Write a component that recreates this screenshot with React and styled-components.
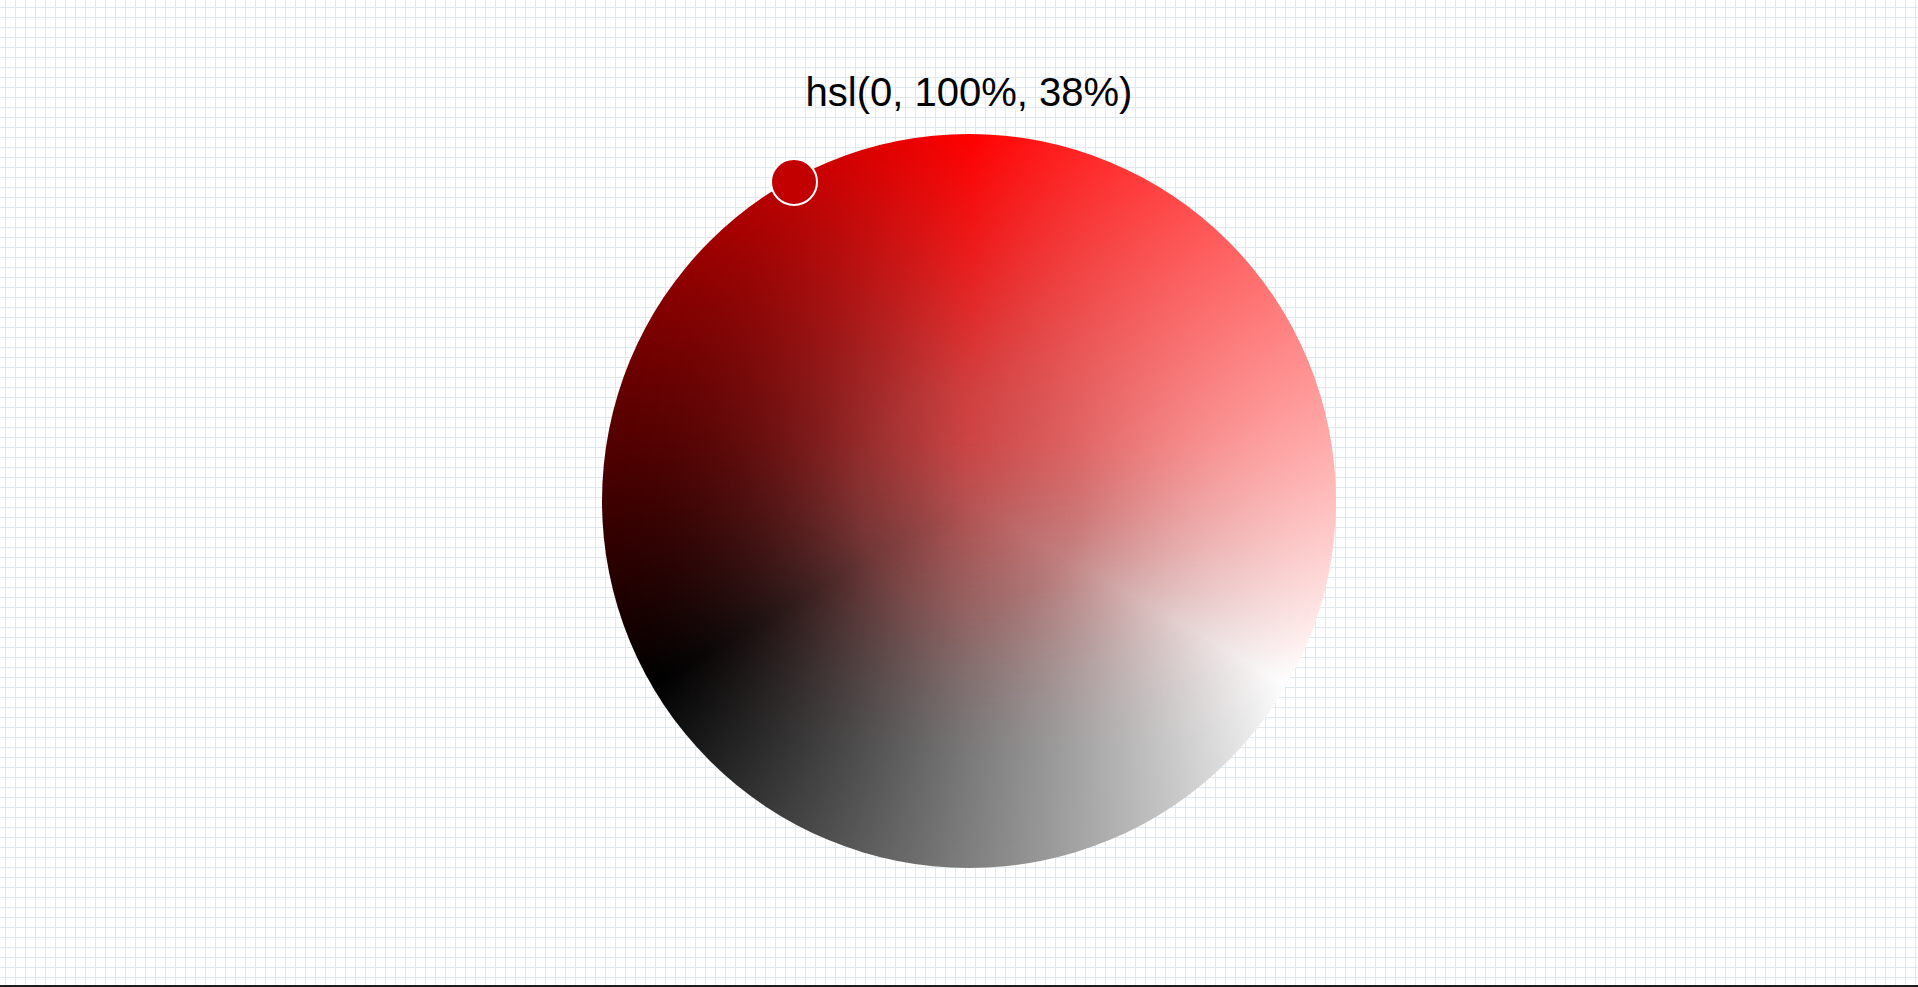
import React from 'react'
import styled, { createGlobalStyle } from 'styled-components'

const RADIUS = 367
const TRACK = 364
const MARKER = 48

const GlobalStyle = createGlobalStyle`
    html, body {
        margin: 0;
        padding: 0;
    }
    body {
        background-color: #ffffff;
        background-image:
            linear-gradient(to right, #dde9ef 1px, transparent 1px),
            linear-gradient(to bottom, #dde9ef 1px, transparent 1px);
        background-size: 10px 10px;
        background-position: 5px 7px;
        font-family: "Liberation Sans", Arial, sans-serif;
    }
`

function lightnessToPoint(lightness) {
    // 50% sits at the top, 0% and 100% sit 120deg either side
    const angle = ((lightness - 50) * 2.4 * Math.PI) / 180
    return {
        left: RADIUS + TRACK * Math.sin(angle) - MARKER / 2,
        top: RADIUS - TRACK * Math.cos(angle) - MARKER / 2,
    }
}

function App() {
    const hue = 0
    const saturation = 100
    const lightness = 38
    const color = `hsl(${hue}, ${saturation}%, ${lightness}%)`

    return (
        <>
            <GlobalStyle />
            <Page>
                <Picker>
                    <Readout>{color}</Readout>
                    <Wheel>
                        <Marker style={{ ...lightnessToPoint(lightness), background: color }} />
                    </Wheel>
                </Picker>
                <Spacer />
                <BottomRule />
            </Page>
        </>
    )
}

const Page = styled.div`
    height: 100vh;
    display: flex;
    flex-direction: column;
    box-sizing: border-box;
    overflow: hidden;
`

const Picker = styled.div`
    display: flex;
    flex-direction: column;
    align-items: center;
    gap: 19px;
    padding: 69px 0 0 20px;
`

const Readout = styled.div`
    font-size: 40px;
    line-height: 46px;
    color: #000;
    white-space: nowrap;
`

const Wheel = styled.div`
    position: relative;
    width: ${RADIUS * 2}px;
    height: ${RADIUS * 2}px;
    border-radius: 50%;
    background: conic-gradient(#ff0000 0deg, #ffffff 120deg, #000000 240deg, #ff0000 360deg);

    /* soft middle: dark-to-light tint that greys out toward the bottom,
       faded out toward the rim */
    &::before {
        content: "";
        position: absolute;
        inset: 0;
        border-radius: 50%;
        background:
            linear-gradient(to bottom, rgba(128, 128, 128, 0) 42%, #808080 85%),
            linear-gradient(to right, #300000 0%, #c84a4a 50%, #ff8a8a 100%);
        background-blend-mode: saturation, normal;
        -webkit-mask-image: radial-gradient(closest-side, #000 0%, rgba(0, 0, 0, 0.85) 30%, rgba(0, 0, 0, 0.4) 65%, transparent 100%);
        mask-image: radial-gradient(closest-side, #000 0%, rgba(0, 0, 0, 0.85) 30%, rgba(0, 0, 0, 0.4) 65%, transparent 100%);
    }
`

const Marker = styled.div`
    position: absolute;
    z-index: 1;
    width: ${MARKER}px;
    height: ${MARKER}px;
    box-sizing: border-box;
    border-radius: 50%;
    border: 2px solid #ffffff;
`

const Spacer = styled.div`
    flex: 1;
`

const BottomRule = styled.div`
    height: 2px;
    background: #1c1c1c;
    flex-shrink: 0;
`

export default App
